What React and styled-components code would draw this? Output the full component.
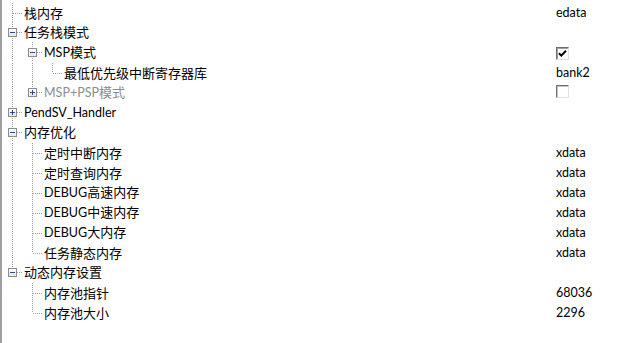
import styled, { createGlobalStyle } from "styled-components";

const GlobalStyle = createGlobalStyle`
  html, body {
    margin: 0;
    padding: 0;
    background: #ffffff;
  }
`;

const Panel = styled.div`
  box-sizing: border-box;
  width: 618px;
  height: 343px;
  padding-top: 2px;
  border-left: 2px solid #a0a0a0;
  background: #ffffff;
  font-family: "Noto Sans CJK SC", "Liberation Sans", sans-serif;
  font-size: 13px;
  color: #000000;
  overflow: hidden;
`;

const Row = styled.div`
  display: grid;
  grid-template-columns: 554px 1fr;
  height: 20px;
  align-items: center;
`;

const TreeCell = styled.div`
  display: flex;
  align-items: center;
  height: 20px;
`;

const Label = styled.span`
  margin-left: 2px;
  line-height: 20px;
  white-space: nowrap;
  color: ${(p) => (p.$disabled ? "#8d8d8d" : "#000000")};
`;

const Latin = styled.span`
  font-family: Lato, "Liberation Sans", sans-serif;
  font-size: 12.5px;
`;

const Value = styled.span`
  font-family: Lato, "Liberation Sans", sans-serif;
  font-size: 12.5px;
  line-height: 20px;
  white-space: nowrap;
`;

const Check = styled.span`
  box-sizing: border-box;
  display: inline-flex;
  align-items: center;
  justify-content: center;
  width: 13px;
  height: 13px;
  border: 1px solid;
  border-color: #6f6f6f #e0e0e0 #e0e0e0 #6f6f6f;
  box-shadow: inset 1px 1px 0 ${(p) => (p.$disabled ? "#c4c4c4" : "#a0a0a0")};
  background: #ffffff;
  margin-top: 2px;
`;

const Guide = styled.svg`
  display: block;
  flex: none;
`;

const tree = [
  { label: "栈内存", value: "edata" },
  {
    label: "任务栈模式",
    children: [
      {
        label: "MSP模式",
        check: true,
        children: [{ label: "最低优先级中断寄存器库", value: "bank2" }],
      },
      { label: "MSP+PSP模式", check: false, disabled: true, collapsed: true, children: [] },
    ],
  },
  { label: "PendSV_Handler", collapsed: true, children: [] },
  {
    label: "内存优化",
    children: [
      { label: "定时中断内存", value: "xdata" },
      { label: "定时查询内存", value: "xdata" },
      { label: "DEBUG高速内存", value: "xdata" },
      { label: "DEBUG中速内存", value: "xdata" },
      { label: "DEBUG大内存", value: "xdata" },
      { label: "任务静态内存", value: "xdata" },
    ],
  },
  {
    label: "动态内存设置",
    children: [
      { label: "内存池指针", value: "68036" },
      { label: "内存池大小", value: "2296" },
    ],
  },
];

function flatten(nodes, rails, out) {
  nodes.forEach((node, i) => {
    const last = i === nodes.length - 1;
    out.push({ ...node, rails, last });
    if (node.children && !node.collapsed) {
      flatten(node.children, [...rails, !last], out);
    }
  });
  return out;
}

const rows = flatten(tree, [], []);

// latin runs get a narrower face, like the YaHei latin glyphs
function mixed(text) {
  return text.split(/([A-Za-z0-9_+]+)/).map((part, i) =>
    /^[A-Za-z0-9_+]+$/.test(part) ? <Latin key={i}>{part}</Latin> : part
  );
}

const DOT = "#a0a0a0";

function Rail() {
  return (
    <Guide width="20" height="20" shapeRendering="crispEdges">
      <line x1="10.5" y1="0" x2="10.5" y2="20" stroke={DOT} strokeDasharray="1 1" />
    </Guide>
  );
}

function Spacer() {
  return <Guide width="20" height="20" />;
}

function Connector({ last, expander, open }) {
  return (
    <Guide width="20" height="20" shapeRendering="crispEdges">
      <defs>
        <linearGradient id="boxfill" x1="0" y1="0" x2="0" y2="1">
          <stop offset="0" stopColor="#ffffff" />
          <stop offset="1" stopColor="#e4e4e4" />
        </linearGradient>
      </defs>
      <line x1="10.5" y1="0" x2="10.5" y2={last ? 10 : 20} stroke={DOT} strokeDasharray="1 1" />
      <line x1="11" y1="10.5" x2="20" y2="10.5" stroke={DOT} strokeDasharray="1 1" />
      {expander && (
        <g>
          <rect x="6.5" y="6.5" width="8" height="8" fill="url(#boxfill)" stroke="#8c8c8c" />
          <line x1="8" y1="10.5" x2="13" y2="10.5" stroke="#2c4a8c" />
          {!open && <line x1="10.5" y1="8" x2="10.5" y2="13" stroke="#2c4a8c" />}
        </g>
      )}
    </Guide>
  );
}

function Tick() {
  return (
    <svg width="9" height="9" viewBox="0 0 9 9">
      <path d="M1 4.2 L3.3 6.6 L8 1.8" fill="none" stroke="#000" strokeWidth="2" />
    </svg>
  );
}

export default function App() {
  return (
    <>
      <GlobalStyle />
      <Panel>
        {rows.map((row, index) => (
          <Row key={index}>
            <TreeCell>
              {row.rails.map((on, k) => (on ? <Rail key={k} /> : <Spacer key={k} />))}
              <Connector
                last={row.last}
                expander={!!row.children}
                open={!row.collapsed}
              />
              <Label $disabled={row.disabled}>{mixed(row.label)}</Label>
            </TreeCell>
            <div>
              {row.value && <Value>{row.value}</Value>}
              {row.check !== undefined && (
                <Check $disabled={row.disabled}>{row.check && <Tick />}</Check>
              )}
            </div>
          </Row>
        ))}
      </Panel>
    </>
  );
}
